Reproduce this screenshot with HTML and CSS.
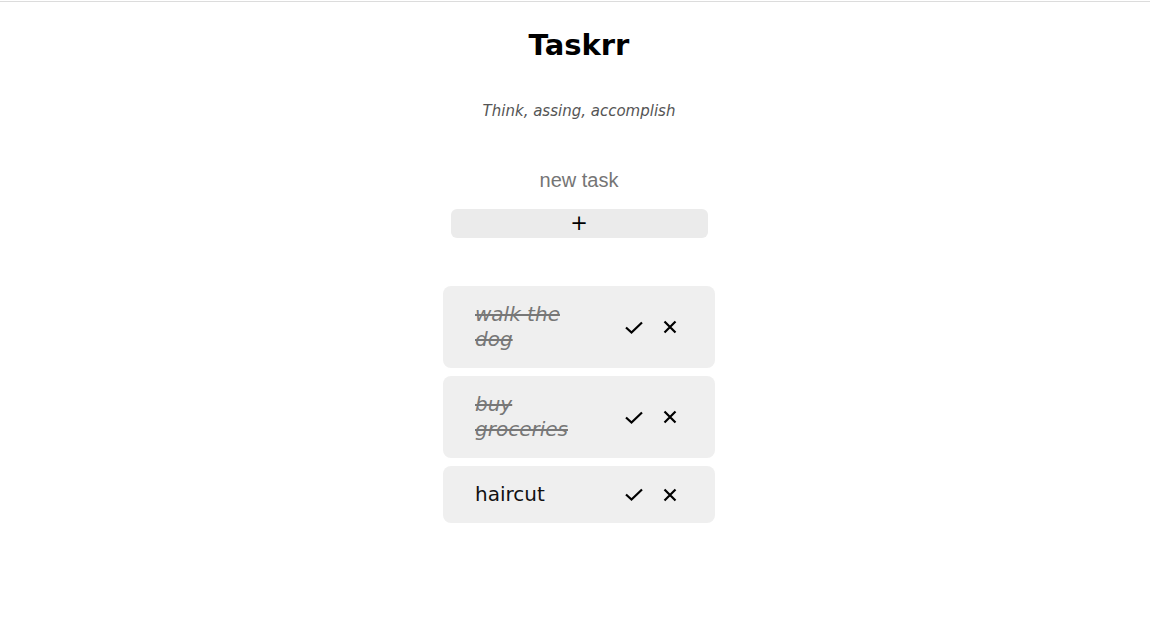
FILE: index.html
```html
<!DOCTYPE html>
<html>
<head>
<meta charset="utf-8">
<link rel="stylesheet" href="styles.css">
</head>
<body>
<div class="topline"></div>
<main class="app">
  <h1 class="title">Taskrr</h1>
  <p class="subtitle">Think, assing, accomplish</p>
  <form class="new-form">
    <input class="new-input" type="text" placeholder="new task">
    <button class="add-btn" type="button">+</button>
  </form>
  <ul class="tasks">
    <li class="task">
      <span class="task-text done">walk the dog</span>
      <span class="actions">
        <svg class="icon check" viewBox="0 0 18 13" width="18" height="13"><polyline points="1,6.5 6.5,11.5 17,1.5" fill="none" stroke="#000" stroke-width="2.2"/></svg>
        <svg class="icon cross" viewBox="0 0 14 14" width="14" height="14"><path d="M1.5 1.5 L12.5 12.5 M12.5 1.5 L1.5 12.5" fill="none" stroke="#000" stroke-width="2.2"/></svg>
      </span>
    </li>
    <li class="task">
      <span class="task-text done">buy groceries</span>
      <span class="actions">
        <svg class="icon check" viewBox="0 0 18 13" width="18" height="13"><polyline points="1,6.5 6.5,11.5 17,1.5" fill="none" stroke="#000" stroke-width="2.2"/></svg>
        <svg class="icon cross" viewBox="0 0 14 14" width="14" height="14"><path d="M1.5 1.5 L12.5 12.5 M12.5 1.5 L1.5 12.5" fill="none" stroke="#000" stroke-width="2.2"/></svg>
      </span>
    </li>
    <li class="task">
      <span class="task-text">haircut</span>
      <span class="actions">
        <svg class="icon check" viewBox="0 0 18 13" width="18" height="13"><polyline points="1,6.5 6.5,11.5 17,1.5" fill="none" stroke="#000" stroke-width="2.2"/></svg>
        <svg class="icon cross" viewBox="0 0 14 14" width="14" height="14"><path d="M1.5 1.5 L12.5 12.5 M12.5 1.5 L1.5 12.5" fill="none" stroke="#000" stroke-width="2.2"/></svg>
      </span>
    </li>
  </ul>
</main>
</body>
</html>
```

FILE: styles.css
```css
html, body {
  margin: 0;
  padding: 0;
  background: #fff;
}
body {
  font-family: "DejaVu Sans", "Open Sans", sans-serif;
}
.topline {
  margin-top: 1px;
  height: 0;
  border-top: 1px solid #dcdcdc;
}
.app {
  padding-left: 8px;
  display: flex;
  flex-direction: column;
  align-items: center;
}
.title {
  margin: 23px 0 0;
  font-size: 29px;
  line-height: 40px;
  font-weight: 700;
  color: #000;
}
.subtitle {
  margin: 35px 0 0;
  font-size: 15px;
  line-height: 22px;
  font-style: italic;
  color: #555;
}
.new-form {
  margin-top: 46px;
  display: flex;
  flex-direction: column;
  align-items: center;
}
.new-input {
  width: 257px;
  border: none;
  outline: none;
  background: transparent;
  text-align: center;
  font-family: "Liberation Sans", Arial, sans-serif;
  font-size: 20px;
  line-height: 24px;
  padding: 0;
  height: 24px;
  color: #333;
}
.new-input::placeholder {
  color: #757575;
}
.add-btn {
  margin-top: 17px;
  width: 257px;
  height: 29px;
  border: none;
  border-radius: 6px;
  background: #ebebeb;
  font-family: "DejaVu Sans", sans-serif;
  font-size: 21px;
  line-height: 27px;
  padding: 0;
  color: #000;
}
.tasks {
  list-style: none;
  margin: 48px 0 0;
  padding: 0;
  display: flex;
  flex-direction: column;
  gap: 8px;
}
.task {
  width: 272px;
  box-sizing: border-box;
  padding: 16px 38px 16px 32px;
  background: #efefef;
  border-radius: 8px;
  display: flex;
  align-items: center;
}
.task-text {
  width: 120px;
  font-size: 20px;
  line-height: 25px;
  color: #111;
}
.task-text.done {
  font-style: italic;
  color: #777;
  text-decoration: line-through;
}
.actions {
  margin-left: auto;
  display: flex;
  align-items: center;
  gap: 20px;
}
.icon {
  display: block;
}
```
